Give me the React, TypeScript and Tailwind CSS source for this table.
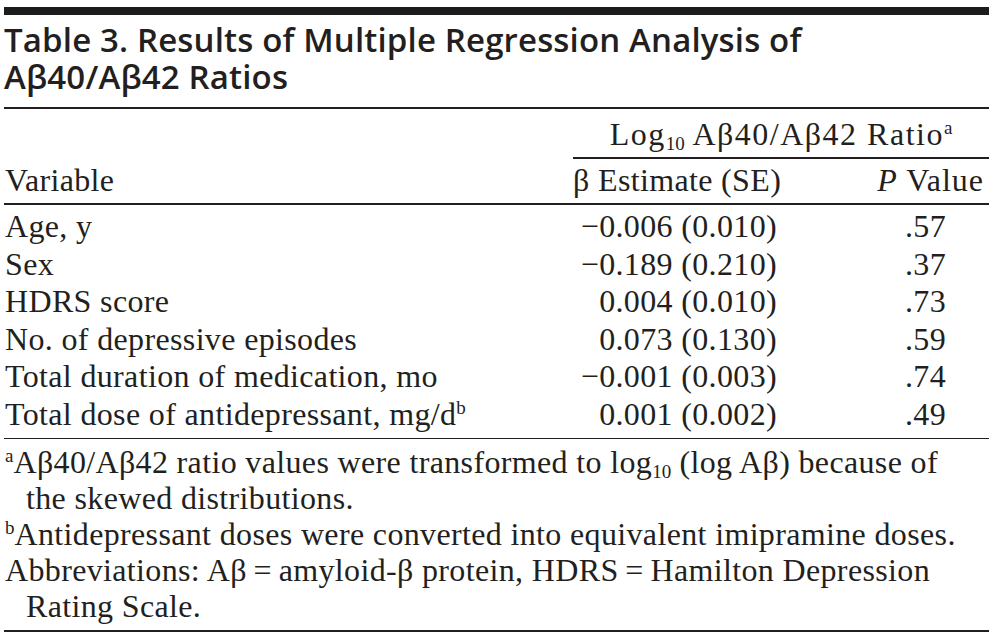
const rows = [
  { label: "Age, y", est: "−0.006 (0.010)", p: ".57" },
  { label: "Sex", est: "−0.189 (0.210)", p: ".37" },
  { label: "HDRS score", est: "0.004 (0.010)", p: ".73" },
  { label: "No. of depressive episodes", est: "0.073 (0.130)", p: ".59" },
  { label: "Total duration of medication, mo", est: "−0.001 (0.003)", p: ".74" },
  { label: "Total dose of antidepressant, mg/d", est: "0.001 (0.002)", p: ".49", note: "b" },
];

function Sup({ children }: { children: string }) {
  return <sup className="top-[-11px] text-[19px] leading-none tracking-normal">{children}</sup>;
}

function Sub({ children }: { children: string }) {
  return <sub className="bottom-[-5px] text-[19px] leading-none tracking-normal">{children}</sub>;
}

export default function App() {
  return (
    <div className="h-[639px] w-[995px] bg-white pl-[4px] pt-[7px] text-[#231f20]">
      <div className="w-[985px]">
        <div className="h-[8px] bg-[#1c1c1c]" />
        <h1 className="mt-[6px] font-['Open_Sans',sans-serif] text-[33px] font-semibold leading-[37px] tracking-[0.15px]">
          Table 3. Results of Multiple Regression Analysis of
          <br />
          Aβ40/Aβ42 Ratios
        </h1>
        <div className="mt-[12px] h-[1.5px] bg-[#231f20]" />

        <div className="font-['Liberation_Serif',serif] text-[32px] tracking-[0.35px]">
          {/* header */}
          <div className="mt-[7px] grid grid-cols-[569px_1fr] leading-[37.5px]">
            <div />
            <div className="whitespace-nowrap text-center tracking-[1.5px]">
              Log<Sub>10</Sub> Aβ40/Aβ42 Ratio<Sup>a</Sup>
            </div>
          </div>
          <div className="mt-[4px] grid grid-cols-[569px_1fr]">
            <div />
            <div className="h-[1.5px] bg-[#231f20]" />
          </div>
          <div className="mt-[3px] grid grid-cols-[569px_209px_1fr] whitespace-nowrap leading-[37.5px]">
            <div className="pl-[1px]">Variable</div>
            <div className="pr-[5px] text-right">β Estimate (SE)</div>
            <div className="flex justify-end pr-[5px]">
              <span className="text-right tracking-[1px]">
                <i>P</i> Value
              </span>
            </div>
          </div>
          <div className="mt-[4px] h-[2px] bg-[#231f20]" />

          {/* body */}
          <div className="pt-[3px]">
            {rows.map((r) => (
              <div key={r.label} className="grid grid-cols-[569px_209px_1fr] whitespace-nowrap leading-[37.6px]">
                <div className="pl-[1px]">
                  {r.label}
                  {r.note && <Sup>{r.note}</Sup>}
                </div>
                <div className="pr-[5px] text-right">{r.est}</div>
                <div className="flex justify-end pr-[5px]">
                  <span className="w-[115px] pr-[2px] text-center">{r.p}</span>
                </div>
              </div>
            ))}
          </div>
          <div className="mt-[4px] h-[1.5px] bg-[#231f20]" />

          {/* footnotes */}
          <div className="mt-[5px] leading-[36px]">
            <p className="pl-[22px] indent-[-21px]">
              <Sup>a</Sup>Aβ40/Aβ42 ratio values were transformed to log<Sub>10</Sub> (log Aβ) because of
              <br />
              the skewed distributions.
            </p>
            <p className="pl-[22px] indent-[-21px]">
              <Sup>b</Sup>Antidepressant doses were converted into equivalent imipramine doses.
            </p>
            <p className="pl-[22px] indent-[-21px]">
              Abbreviations: Aβ{"\u2009=\u2009"}amyloid-β protein, HDRS{"\u2009=\u2009"}Hamilton Depression
              <br />
              Rating Scale.
            </p>
          </div>
          <div className="mt-[6px] h-[2px] bg-[#231f20]" />
        </div>
      </div>
    </div>
  );
}
